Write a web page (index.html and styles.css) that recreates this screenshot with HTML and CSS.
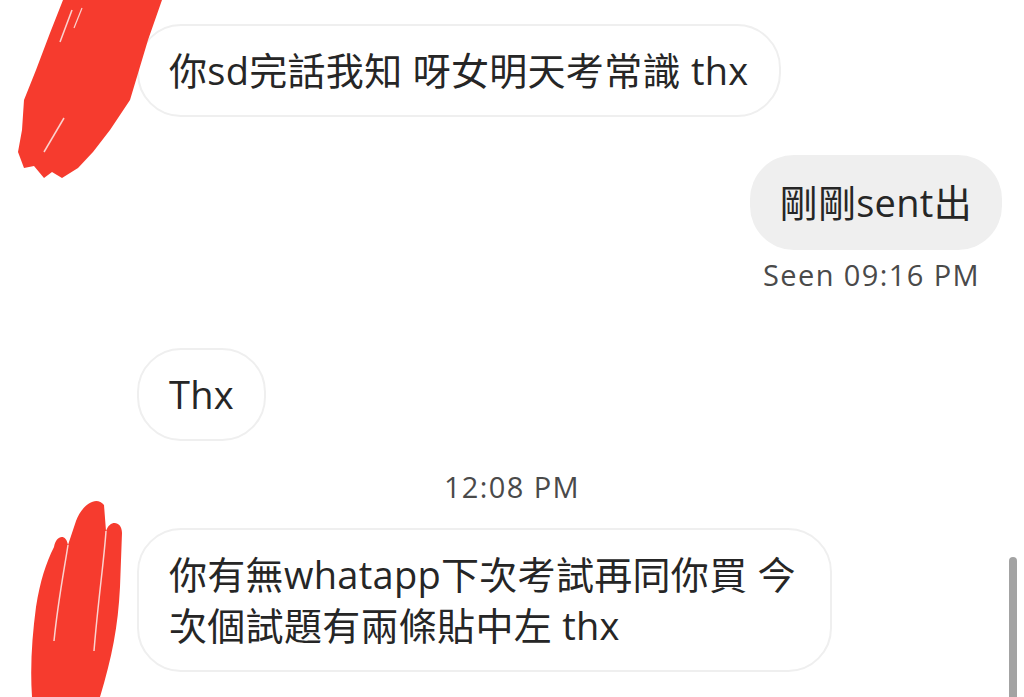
FILE: index.html
```html
<!DOCTYPE html>
<html lang="zh-Hant">

<head>
    <meta charset="UTF-8">
    <meta name="viewport" content="width=device-width, initial-scale=1.0">
    <title>Chat</title>
    <link rel="stylesheet" href="styles.css">
</head>

<body>

    <div class="thread">
        <div class="row in">
            <p class="bubble">你sd完話我知 呀女明天考常識 thx</p>
        </div>

        <div class="row out">
            <p class="bubble">剛剛sent出</p>
        </div>
        <p class="seen">Seen 09:16 PM</p>

        <div class="row in gap-big">
            <p class="bubble">Thx</p>
        </div>

        <p class="time">12:08 PM</p>

        <div class="row in">
            <p class="bubble wide">你有無whatapp下次考試再同你買 今次個試題有兩條貼中左 thx</p>
        </div>
    </div>

    <!-- red marker over the avatars -->
    <svg class="scribble top" width="170" height="185" viewBox="0 0 170 185">
        <path d="M63 0 L162 0 L148 40 L130 100 L110 130 L93 152 L78 168 L62 178 L52 172 L44 178 L34 166 L24 168 L18 152 L22 130 L24 100 L36 70 L50 33 Z" fill="#f63b2e" />
        <path d="M72 10 L60 42" stroke="#fbd3cf" stroke-width="1.5" fill="none" />
        <path d="M64 118 L44 152" stroke="#fbd3cf" stroke-width="1.5" fill="none" />
        <path d="M82 8 L74 28" stroke="#fbd3cf" stroke-width="1.2" fill="none" />
    </svg>

    <svg class="scribble bottom" width="110" height="200" viewBox="0 0 110 200">
        <path d="M24 50 C26 38 36 36 38 48 L46 24 C52 8 66 -2 74 8 L76 34 C80 22 92 24 92 36 L90 90 C88 130 82 160 70 200 L2 200 C0 170 2 140 6 110 C10 84 16 66 24 50 Z" fill="#f63b2e" />
        <path d="M38 48 C34 74 28 104 24 144" stroke="#fbd3cf" stroke-width="1.5" fill="none" />
        <path d="M76 34 C74 64 68 104 64 154" stroke="#fbd3cf" stroke-width="1.5" fill="none" />
    </svg>

    <div class="scrollbar"></div>

</body>

</html>
```

FILE: styles.css
```css
body {
    font-family: "Open Sans", "Noto Sans CJK TC", sans-serif;
    margin: 0;
    background-color: #fff;
    color: #262626;
    height: 697px;
    overflow: hidden;
    position: relative;
}

.thread {
    display: flex;
    flex-direction: column;
    padding: 24px 22px 0 22px;
}

.row {
    display: flex;
}

.row.in {
    padding-left: 115px;
}

.row.out {
    justify-content: flex-end;
    margin-top: 38px;
}

.gap-big {
    margin-top: 56px;
}

.bubble {
    margin: 0;
    font-size: 38px;
    line-height: 51px;
    letter-spacing: 0.3px;
    border-radius: 44px;
}

.in .bubble {
    border: 2px solid #efefef;
    padding: 19px 30px;
}

.out .bubble {
    background-color: #efefef;
    padding: 22px 30px;
}

.wide {
    max-width: 631px;
}

.seen,
.time {
    margin: 0;
    font-size: 29px;
    line-height: 34px;
    letter-spacing: 1.4px;
    color: #4a4a4a;
}

.seen {
    margin-top: 8px;
    text-align: right;
    padding-right: 22px;
}

.time {
    margin-top: 29px;
    margin-bottom: 24px;
    text-align: center;
}

.scribble {
    position: absolute;
    left: 0;
}

.scribble.top {
    top: 0;
}

.scribble.bottom {
    left: 30px;
    top: 497px;
}

.scrollbar {
    position: absolute;
    left: 1009px;
    top: 557px;
    width: 8px;
    height: 150px;
    border-radius: 4px;
    background-color: #a3a3a3;
}
```
